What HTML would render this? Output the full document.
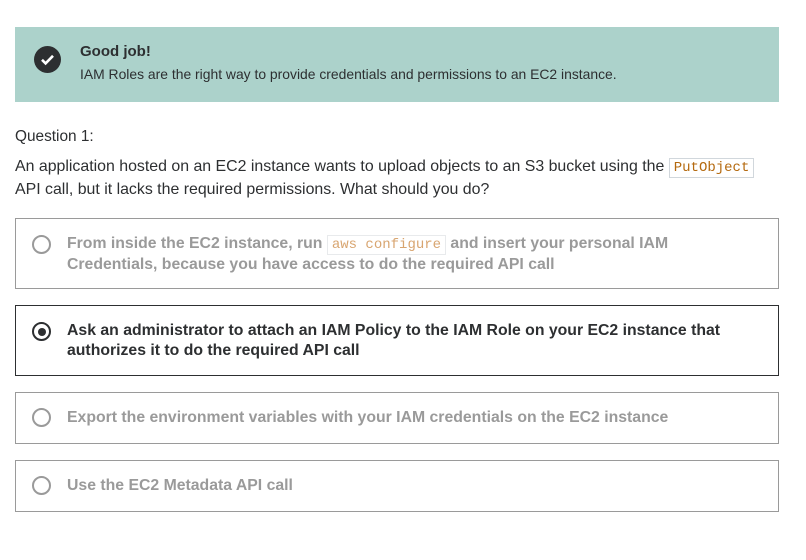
<!DOCTYPE html>
<html><head><style>
*{margin:0;padding:0;box-sizing:border-box}
body{width:806px;height:560px;background:#fff;font-family:"Liberation Sans",sans-serif;color:#2d2f31;position:relative;overflow:hidden}
.ban{position:absolute;left:15px;top:27px;width:764px;height:75px;background:#acd2cb}
.chk{position:absolute;left:19px;top:19px;width:27px;height:27px;border-radius:50%;background:#2d2f31}
.t1{position:absolute;left:65px;top:16px;font-weight:bold;font-size:15px}
.t2{position:absolute;left:65px;top:39px;font-size:13.9px}
.q{position:absolute;left:15px;top:128px;font-size:15.4px}
.p{position:absolute;left:15px;top:156px;font-size:15.9px;line-height:22px;width:780px}
code{font-family:"Liberation Mono",monospace;font-size:14px;border:1px solid #d1d7dc;padding:1px 4px;color:#b4690e;background:#fff}
.o{position:absolute;left:15px;width:764px;border:1px solid #9a9a9a;background:#fff}
.o.s{border-color:#2d2f31}
.r{position:absolute;left:16px;width:19px;height:19px;border:2px solid #9a9a9a;border-radius:50%}
.s .r{border-color:#2d2f31}
.s .r::after{content:"";position:absolute;left:3.5px;top:3.5px;width:8px;height:8px;border-radius:50%;background:#2d2f31}
.ot{position:absolute;left:51px;font-weight:bold;font-size:15.8px;line-height:20px;color:#9a9a9a;width:700px}
.s .ot{color:#2d2f31}
.ot code{font-weight:normal;color:#d8a570;border-color:#e8eaec}
</style></head><body>
<div class="ban"><div class="chk"><svg width="27" height="27" viewBox="0 0 27 27"><path d="M8 13.8l3.6 3.6 7.4-7.6" fill="none" stroke="#fff" stroke-width="2.6"/></svg></div>
<div class="t1">Good job!</div>
<div class="t2">IAM Roles are the right way to provide credentials and permissions to an EC2 instance.</div></div>
<div class="q">Question 1:</div>
<div class="p">An application hosted on an EC2 instance wants to upload objects to an S3 bucket using the <code>PutObject</code><br>API call, but it lacks the required permissions. What should you do?</div>
<div class="o" style="top:218px;height:71px"><div class="r" style="top:16px"></div><div class="ot" style="top:15px">From inside the EC2 instance, run <code>aws configure</code> and insert your personal IAM<br>Credentials, because you have access to do the required API call</div></div>
<div class="o s" style="top:305px;height:71px"><div class="r" style="top:16px"></div><div class="ot" style="top:15px">Ask an administrator to attach an IAM Policy to the IAM Role on your EC2 instance that<br>authorizes it to do the required API call</div></div>
<div class="o" style="top:392px;height:52px"><div class="r" style="top:15px"></div><div class="ot" style="top:15px">Export the environment variables with your IAM credentials on the EC2 instance</div></div>
<div class="o" style="top:460px;height:52px"><div class="r" style="top:15px"></div><div class="ot" style="top:15px">Use the EC2 Metadata API call</div></div>
</body></html>
